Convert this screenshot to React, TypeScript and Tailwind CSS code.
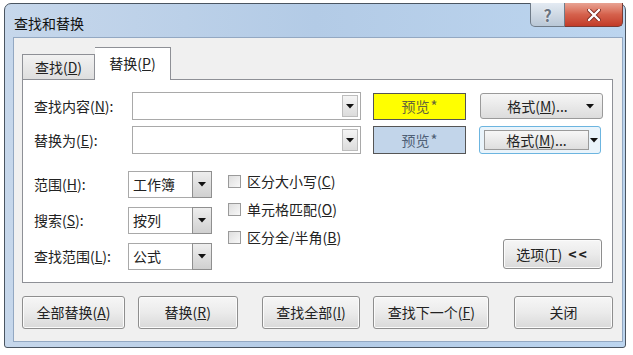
import React from "react";

const font = { fontFamily: '"Noto Sans CJK SC", "Noto Sans", sans-serif' };

function Tri() {
  return (
    <svg width="8" height="5" viewBox="0 0 8 5" className="block">
      <path d="M0 0 H8 L4 4.5 Z" fill="#111" />
    </svg>
  );
}

function Combo({ w }: { w: string }) {
  return (
    <div className={`${w} h-[28px] border border-[#a9a9a9] bg-white flex items-center justify-end pr-[2px]`}>
      <div className="w-[16px] h-[22px] border border-[#bdbdbd] bg-gradient-to-b from-[#f5f5f5] to-[#dcdcdc] flex items-center justify-center">
        <Tri />
      </div>
    </div>
  );
}

function Select({ text }: { text: string }) {
  return (
    <div className="w-[84px] h-[27px] flex">
      <div className="flex-1 border border-[#a9a9a9] border-r-0 bg-white flex items-center pl-[4px] text-[14px] text-[#222]">
        {text}
      </div>
      <div className="w-[20px] border border-[#8f8f8f] bg-gradient-to-b from-[#eeeeee] to-[#d0d0d0] flex items-center justify-center">
        <Tri />
      </div>
    </div>
  );
}

function Check({ children }: { children: React.ReactNode }) {
  return (
    <div className="flex items-center h-[28px]">
      <div className="w-[13px] h-[13px] border border-[#9a9a9a] bg-gradient-to-br from-[#dedede] to-[#f8f8f8]" />
      <span className="ml-[6px] text-[14px] text-[#222]">{children}</span>
    </div>
  );
}

function Btn({ w, children, className = "" }: { w: string; children: React.ReactNode; className?: string }) {
  return (
    <div
      className={`${w} h-[33px] rounded-[3px] border border-[#8e8e8e] bg-gradient-to-b from-[#f6f6f6] via-[#ebebeb] to-[#d9d9d9] flex items-center justify-center text-[14px] text-[#222] shadow-[inset_0_0_0_1px_#fbfbfb] ${className}`}
    >
      {children}
    </div>
  );
}

export default function App() {
  return (
    <div className="w-[633px] h-[355px] bg-white pt-[3px] pl-[4px]" style={font}>
      <div className="w-[622px] h-[345px] rounded-t-[7px] rounded-b-[3px] border border-[#4a5561] bg-gradient-to-r from-[#c6d7eb] via-[#b3cbe6] to-[#bcd5ef] flex flex-col pl-[8px] pr-[2px] pb-[5px]">
        {/* title bar */}
        <div className="h-[33px] flex items-start justify-between">
          <div className="pt-[9px] pl-[1px] text-[14px] text-[#111] leading-[20px]">查找和替换</div>
          <div className="flex -mt-[1px]">
            <div className="w-[35px] h-[24px] rounded-bl-[5px] border border-[#6f7b88] border-t-0 bg-gradient-to-b from-[#e4ebf3] via-[#cfd9e4] to-[#b9c7d6] flex items-center justify-center">
              <span className="text-[16px] font-bold text-[#6a7481] leading-none" style={{ textShadow: "0 0 2px #fff" }}>?</span>
            </div>
            <div className="w-[58px] h-[24px] rounded-br-[5px] border border-[#7a3a33] border-t-0 border-l-0 bg-gradient-to-b from-[#e8a393] via-[#d5614c] to-[#c23b28] flex items-center justify-center">
              <svg width="14" height="12" viewBox="0 0 14 12">
                <path d="M2 1 L12 11 M12 1 L2 11" stroke="#7a2a20" strokeWidth="4" strokeLinecap="round" />
                <path d="M2 1 L12 11 M12 1 L2 11" stroke="#ffffff" strokeWidth="2.4" strokeLinecap="round" />
              </svg>
            </div>
          </div>
        </div>
        {/* client */}
        <div className="flex-1 bg-[#f0f0f0] border border-[#93a8c2] pl-[8px] pt-[9px] pr-[9px]">
          {/* tabs */}
          <div className="flex items-end h-[32px] relative z-10">
            <div className="w-[73px] h-[25px] border border-[#8e9096] border-b-0 bg-gradient-to-b from-[#f2f2f2] to-[#dedede] flex items-center justify-center text-[14px] text-[#222]">
              查找(<u>D</u>)
            </div>
            <div className="w-[76px] h-[33px] -mb-[1px] border border-[#8e9096] border-b-0 border-l-0 bg-white flex items-start justify-center pt-[5px] text-[14px] text-[#222]">
              替换(<u>P</u>)
            </div>
          </div>
          {/* panel */}
          <div className="w-[591px] h-[204px] border border-[#8e9096] bg-white pl-[11px] pt-[12px] flex flex-col">
            <div className="flex items-center h-[28px]">
              <div className="w-[98px] text-[14px] text-[#222]">查找内容(<u>N</u>):</div>
              <Combo w="w-[229px]" />
              <div className="ml-[12px] w-[93px] h-[27px] border border-[#555] bg-[#ffff00] flex items-center justify-center text-[14px] text-[#66663a]">
                预览<span className="text-[15px] ml-[1px]">*</span>
              </div>
              <div className="ml-[14px] w-[123px] h-[26px] rounded-[3px] border border-[#9a9a9a] bg-gradient-to-b from-[#f6f6f6] to-[#dcdcdc] flex items-center text-[14px] text-[#222]">
                <span className="flex-1 text-center pl-[8px]">格式(<u>M</u>)...</span>
                <span className="pr-[8px]"><Tri /></span>
              </div>
            </div>
            <div className="flex items-center h-[28px] mt-[6px]">
              <div className="w-[98px] text-[14px] text-[#222]">替换为(<u>E</u>):</div>
              <Combo w="w-[229px]" />
              <div className="ml-[12px] w-[93px] h-[28px] border border-[#555] bg-[#c2d5ea] flex items-center justify-center text-[14px] text-[#4f6076]">
                预览<span className="text-[15px] ml-[1px]">*</span>
              </div>
              <div className="ml-[13px] w-[122px] h-[28px] rounded-[3px] border border-[#6cb5e0] bg-[#eaf4fb] flex items-center pl-[4px] pr-[2px] text-[14px] text-[#222]">
                <div className="w-[105px] h-[20px] border border-[#9a9a9a] bg-gradient-to-b from-[#f7f7f7] to-[#dedede] flex items-center justify-center">
                  格式(<u>M</u>)...
                </div>
                <div className="flex-1 flex justify-center"><Tri /></div>
              </div>
            </div>
            <div className="flex mt-[17px]">
              <div className="flex flex-col gap-[9px]">
                <div className="flex items-center">
                  <div className="w-[94px] text-[14px] text-[#222]">范围(<u>H</u>):</div>
                  <Select text="工作簿" />
                </div>
                <div className="flex items-center">
                  <div className="w-[94px] text-[14px] text-[#222]">搜索(<u>S</u>):</div>
                  <Select text="按列" />
                </div>
                <div className="flex items-center">
                  <div className="w-[94px] text-[14px] text-[#222]">查找范围(<u>L</u>):</div>
                  <Select text="公式" />
                </div>
              </div>
              <div className="ml-[16px] flex flex-col -mt-[4px]">
                <Check>区分大小写(<u>C</u>)</Check>
                <Check>单元格匹配(<u>O</u>)</Check>
                <Check>区分全/半角(<u>B</u>)</Check>
              </div>
              <div className="flex-1 flex items-end justify-end pr-[10px] pb-[1px]">
                <div className="w-[99px] h-[30px] rounded-[3px] border border-[#8e8e8e] bg-gradient-to-b from-[#f6f6f6] via-[#ebebeb] to-[#d9d9d9] flex items-center justify-center text-[14px] text-[#222] shadow-[inset_0_0_0_1px_#fbfbfb]">
                  选项(<u>T</u>)<span className="ml-[6px] font-bold tracking-[2px]">&lt;&lt;</span>
                </div>
              </div>
            </div>
          </div>
          {/* bottom buttons */}
          <div className="flex mt-[13px]">
            <Btn w="w-[103px]">全部替换(<u>A</u>)</Btn>
            <Btn w="w-[100px]" className="ml-[13px]">替换(<u>R</u>)</Btn>
            <Btn w="w-[99px]" className="ml-[24px]">查找全部(<u>I</u>)</Btn>
            <Btn w="w-[116px]" className="ml-[13px]">查找下一个(<u>F</u>)</Btn>
            <Btn w="w-[99px]" className="ml-[25px]">关闭</Btn>
          </div>
        </div>
      </div>
    </div>
  );
}
